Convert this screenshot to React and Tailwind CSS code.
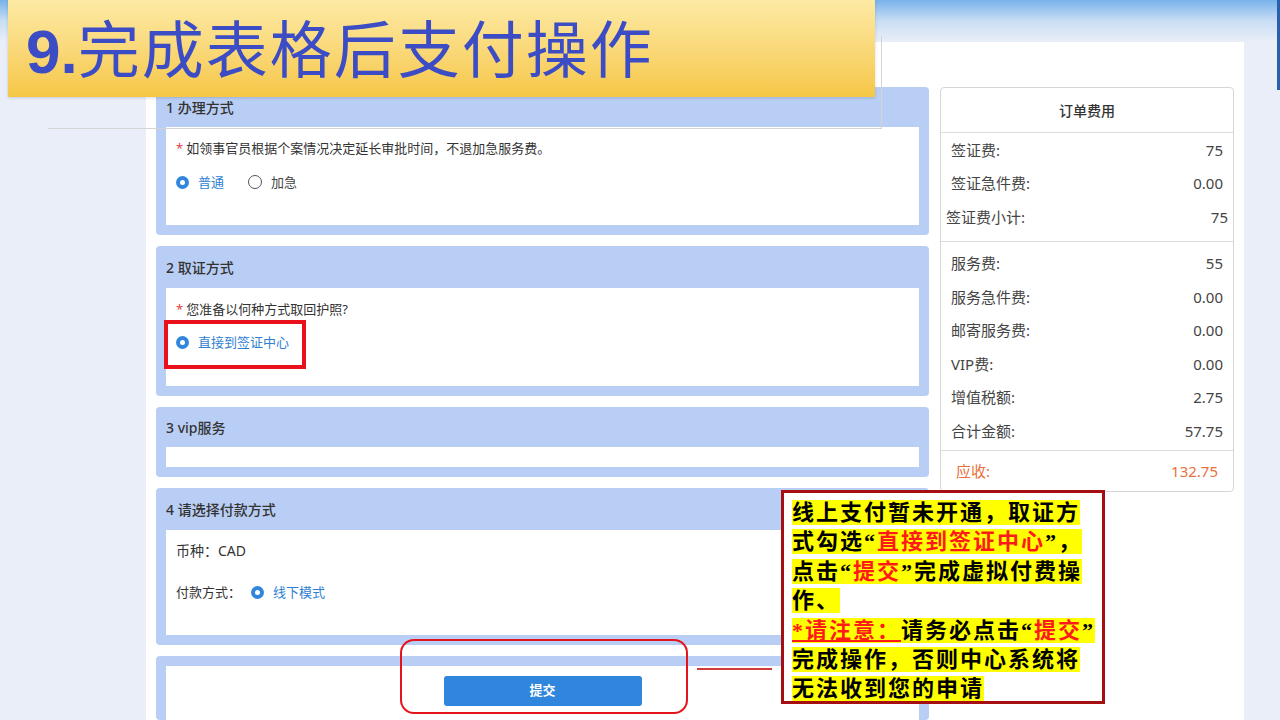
import React from 'react'

function Radio({ checked, label }) {
  return (
    <span className="inline-flex items-center gap-[9px]">
      {checked ? (
        <span className="w-[13px] h-[13px] rounded-full bg-[#2f86dc] flex items-center justify-center">
          <span className="w-[5px] h-[5px] rounded-full bg-white"></span>
        </span>
      ) : (
        <span className="w-[14px] h-[14px] rounded-full border border-[#555] bg-white"></span>
      )}
      <span className={checked ? 'text-[#2f7fd3]' : 'text-[#444]'}>{label}</span>
    </span>
  )
}

function Section({ title, headerH, children, boxClass }) {
  return (
    <div className="bg-[#b9cef4] rounded-[4px] px-[10px] pb-[10px]">
      {title && (
        <div
          className="flex items-center text-[14px] font-medium text-[#333]"
          style={{ height: headerH }}
        >
          {title}
        </div>
      )}
      <div className={'bg-white ' + boxClass}>{children}</div>
    </div>
  )
}

const fees1 = [
  ['签证费:', '75'],
  ['签证急件费:', '0.00'],
]

const fees2 = [
  ['服务费:', '55'],
  ['服务急件费:', '0.00'],
  ['邮寄服务费:', '0.00'],
  ['VIP费:', '0.00'],
  ['增值税额:', '2.75'],
  ['合计金额:', '57.75'],
]

export default function App() {
  return (
    <div
      className="relative w-[1280px] h-[720px] overflow-hidden bg-[#eaeef8] flex flex-col"
      style={{ fontFamily: '"Noto Sans", "Noto Sans CJK SC", sans-serif' }}
    >
      {/* TOP BAND */}
      <div className="h-[42px] shrink-0 bg-linear-to-b from-[#78b2ea] via-[#c9def4] to-[#eaeef8]"></div>

      <div className="flex flex-1 min-h-0">
        <div className="w-[146px] shrink-0"></div>

        {/* WHITE PAGE */}
        <div className="w-[1098px] shrink-0 bg-white flex gap-[11px] pl-[10px] pr-[10px] pt-[45px]">
          {/* FORM */}
          <div className="w-[773px] shrink-0 flex flex-col gap-[11px]">
            <Section title="1 办理方式" headerH={40} boxClass="h-[98px] px-[10px] pt-[12px] text-[13px]">
              <div className="leading-[18px] text-[#333]">
                <span className="text-[#e04545] mr-[3px]">*</span>
                如领事官员根据个案情况决定延长审批时间，不退加急服务费。
              </div>
              <div className="mt-[16px] leading-[18px] flex gap-[24px]">
                <Radio checked label="普通" />
                <Radio label="加急" />
              </div>
            </Section>

            <Section title="2 取证方式" headerH={42} boxClass="h-[98px] px-[10px] pt-[12px] text-[13px]">
              <div className="leading-[18px] text-[#333]">
                <span className="text-[#e04545] mr-[3px]">*</span>
                您准备以何种方式取回护照?
              </div>
              <div className="mt-[15px] leading-[18px] flex">
                <Radio checked label="直接到签证中心" />
              </div>
            </Section>

            <Section title="3 vip服务" headerH={40} boxClass="h-[20px]" />

            <Section title="4 请选择付款方式" headerH={42} boxClass="h-[105px] px-[10px] pt-[12px] text-[13px]">
              <div className="leading-[18px] text-[#333] text-[14px]">币种：CAD</div>
              <div className="mt-[23px] leading-[18px] flex items-center text-[#333]">
                <span className="mr-[10px]">付款方式：</span>
                <Radio checked label="线下模式" />
              </div>
            </Section>

            <div className="bg-[#b9cef4] rounded-[4px] px-[10px] pt-[10px] flex-1">
              <div className="bg-white h-full flex justify-center pt-[10px]">
                <button className="w-[198px] h-[30px] rounded-[3px] bg-[#2f86dc] text-white text-[13px] font-bold">
                  提交
                </button>
              </div>
            </div>
          </div>

          {/* FEE CARD */}
          <div className="w-[294px] h-[405px] shrink-0 border border-[#d6d6d6] rounded-[4px] text-[15px] text-[#444] flex flex-col">
            <div className="h-[45px] flex items-center justify-center border-b border-[#dcdcdc] text-[14px] font-medium text-[#333]">
              订单费用
            </div>
            <div className="border-b border-[#dcdcdc] pb-[7px]">
              {fees1.map(([k, v]) => (
                <div key={k} className="h-[33.5px] px-[10px] flex items-center justify-between">
                  <span>{k}</span>
                  <span>{v}</span>
                </div>
              ))}
              <div className="h-[33.5px] px-[5px] flex items-center justify-between">
                <span>签证费小计:</span>
                <span>75</span>
              </div>
            </div>
            <div className="border-b border-[#dcdcdc] pt-[5px] pb-[2px]">
              {fees2.map(([k, v]) => (
                <div key={k} className="h-[33.5px] px-[10px] flex items-center justify-between">
                  <span>{k}</span>
                  <span>{v}</span>
                </div>
              ))}
            </div>
            <div className="flex-1 px-[15px] flex items-center justify-between text-[#e8703d]">
              <span>应收:</span>
              <span>132.75</span>
            </div>
          </div>
        </div>

        <div className="flex-1"></div>
      </div>

      {/* SCREENSHOT OUTLINE */}
      <div className="absolute left-[48px] top-[36px] w-[834px] h-[93px] border-r border-b border-[#d4d4d4]"></div>

      {/* RIGHT EDGE LINE */}
      <div className="absolute right-0 top-0 w-[3px] h-[90px] bg-[#2a5fb0]"></div>

      {/* TITLE */}
      <div className="absolute left-[8px] top-0 w-[867px] h-[97px] bg-linear-to-b from-[#fdeaa4] to-[#f6c744] shadow-[0_1px_3px_rgba(0,0,0,0.15)] flex items-center pl-[18px]">
        <h1
          className="text-[62px] leading-none text-[#3b4cc4] tracking-[2px] pt-[6px]"
          style={{ fontFamily: '"Liberation Sans", "Noto Sans CJK SC", sans-serif' }}
        >
          <span className="font-bold tracking-normal">9.</span>完成表格后支付操作
        </h1>
      </div>

      {/* HIGHLIGHT BOXES */}
      <div className="absolute left-[164px] top-[320px] w-[142px] h-[49px] border-[4px] border-[#e8101a]"></div>
      <div className="absolute left-[400px] top-[639px] w-[288px] h-[75px] border-2 border-[#e5141c] rounded-[14px]"></div>
      <div className="absolute left-[697px] top-[668px] w-[75px] h-[2px] bg-[#d33a3a]"></div>

      {/* CALLOUT */}
      <div
        className="absolute left-[781px] top-[490px] w-[324px] h-[214px] bg-white border-[3px] border-[#a50f12] pl-[8px] pt-[5px] text-[22px] leading-[29.4px] font-bold text-black"
        style={{ fontFamily: '"Liberation Serif", "Noto Sans CJK SC", serif' }}
      >
        <div className="whitespace-nowrap"><span className="bg-[#ffff00] tracking-[2px]">线上支付暂未开通，取证方</span></div>
        <div className="whitespace-nowrap"><span className="bg-[#ffff00] tracking-[2px]">式勾选“<span className="text-[#ff1a1a]">直接到签证中心</span>”，</span></div>
        <div className="whitespace-nowrap"><span className="bg-[#ffff00] tracking-[2px]">点击“<span className="text-[#ff1a1a]">提交</span>”完成虚拟付费操</span></div>
        <div className="whitespace-nowrap"><span className="bg-[#ffff00] tracking-[2px]">作、</span></div>
        <div className="whitespace-nowrap"><span className="bg-[#ffff00] tracking-[2px]"><span className="text-[#ff1a1a] underline decoration-[#ff1a1a]">*请注意：</span>请务必点击“<span className="text-[#ff1a1a]">提交</span>”</span></div>
        <div className="whitespace-nowrap"><span className="bg-[#ffff00] tracking-[2px]">完成操作，否则中心系统将</span></div>
        <div className="whitespace-nowrap"><span className="bg-[#ffff00] tracking-[2px]">无法收到您的申请</span></div>
      </div>
    </div>
  )
}
